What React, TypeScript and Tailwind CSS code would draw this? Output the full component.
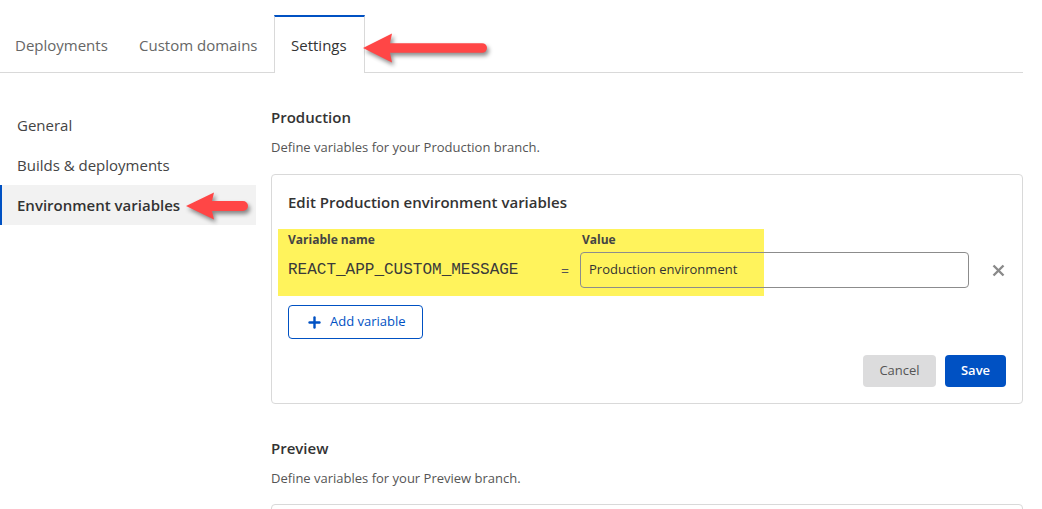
import { Plus } from "lucide-react";

function Arrow({ tipX, tipY, headX, headHalf, shaftHalf, endX }: { tipX: number; tipY: number; headX: number; headHalf: number; shaftHalf: number; endX: number }) {
  const d = `M${tipX} ${tipY} L${headX} ${tipY - headHalf} L${headX - 2} ${tipY - shaftHalf} L${endX - shaftHalf} ${tipY - shaftHalf} A${shaftHalf} ${shaftHalf} 0 0 1 ${endX - shaftHalf} ${tipY + shaftHalf} L${headX - 2} ${tipY + shaftHalf} L${headX} ${tipY + headHalf} Z`;
  return <path d={d} fill="#ff4646" />;
}

export default function App() {
  const tabs = [
    { label: "Deployments", w: "w-[124px]" },
    { label: "Custom domains", w: "w-[150px]" },
  ];
  const side = ["General", "Builds & deployments"];

  return (
    <div className="relative w-[1042px] h-[509px] overflow-hidden bg-white font-['Open_Sans',sans-serif] text-[#333]">
      {/* tabs */}
      <div className="mt-[15px] flex w-[1023px] border-b border-[#d9d9d9]">
        {tabs.map((t) => (
          <div key={t.label} className={`${t.w} h-[57px] flex items-center pl-[15px] pt-[3px] text-[15px] text-[#666]`}>
            {t.label}
          </div>
        ))}
        <div className="w-[91px] h-[58px] -mb-px flex items-center pl-4 pt-[1px] border-t-2 border-x border-t-[#0051c3] border-x-[#d9d9d9] bg-white text-[15px] text-[#333]">
          Settings
        </div>
      </div>

      <div className="flex">
        {/* sidebar */}
        <div className="w-[256px] pt-8 shrink-0">
          {side.map((s) => (
            <div key={s} className="h-10 flex items-center pl-[17px] text-[15px] text-[#444]">
              {s}
            </div>
          ))}
          <div className="h-10 flex items-center pl-[15px] border-l-2 border-[#0051c3] bg-[#f2f2f2] text-[15px] font-semibold text-[#333]">
            Environment variables
          </div>
        </div>

        {/* main */}
        <div className="ml-[15px] w-[752px] pt-[34px]">
          <h2 className="text-[15px] font-semibold leading-5">Production</h2>
          <p className="mt-[10px] text-[13px] leading-5 text-[#555]">Define variables for your Production branch.</p>

          <div className="mt-[17px] h-[230px] rounded border border-[#d9d9d9] px-4 pt-[17px]">
            <h3 className="text-[15px] font-semibold leading-5">Edit Production environment variables</h3>

            <div className="relative mt-[18px]">
              <div className="absolute -left-[10px] -top-[1px] w-[486px] h-[67px] bg-[#fff35c]" />
              <div className="relative grid grid-cols-[262px_30px_389px_1fr] gap-y-[2px] items-center">
                <div className="text-[12px] font-bold leading-[20px] text-[#444]">Variable name</div>
                <div />
                <div className="pl-[2px] text-[12px] font-bold leading-[20px] text-[#444]">Value</div>
                <div />
                <div className="font-['Liberation_Mono',monospace] text-[16px] text-[#3a3a3a] whitespace-nowrap">REACT_APP_CUSTOM_MESSAGE</div>
                <div className="pl-[11px] text-[14px] text-[#555]">=</div>
                <div className="h-9 rounded border border-[#8c8c8c] flex items-center pl-2 text-[13px] text-[#333]">
                  Production environment
                </div>
                <div className="flex justify-end pr-[1px]">
                  <svg width="13" height="13" viewBox="0 0 13 13">
                    <path d="M1.5 1.5 L11.5 11.5 M11.5 1.5 L1.5 11.5" stroke="#8a8a8a" strokeWidth="2.4" />
                  </svg>
                </div>
              </div>
            </div>

            <button className="mt-[17px] h-[34px] w-[135px] rounded border border-[#0051c3] flex items-center gap-[7px] pl-[17px] text-[13px] text-[#0051c3]">
              <Plus size={17} strokeWidth={3.4} />
              Add variable
            </button>

            <div className="mt-4 flex justify-end gap-[9px]">
              <button className="h-8 w-[73px] rounded bg-[#dcdcdd] text-[13px] text-[#555]">Cancel</button>
              <button className="h-8 w-[61px] rounded bg-[#0051c3] text-[13px] font-semibold text-white">Save</button>
            </div>
          </div>

          <h2 className="mt-[34px] text-[15px] font-semibold leading-5">Preview</h2>
          <p className="mt-[10px] text-[13px] leading-5 text-[#555]">Define variables for your Preview branch.</p>
          <div className="mt-[16px] h-[60px] rounded border border-[#d9d9d9]" />
        </div>
      </div>

      {/* annotation arrows */}
      <svg className="pointer-events-none absolute left-0 top-0 drop-shadow-[2px_3px_2px_rgba(0,0,0,0.45)]" width="1042" height="509">
        <Arrow tipX={363} tipY={48} headX={392} headHalf={14.5} shaftHalf={4.8} endX={487} />
        <Arrow tipX={186} tipY={206} headX={214} headHalf={13.5} shaftHalf={5} endX={248} />
      </svg>
    </div>
  );
}
